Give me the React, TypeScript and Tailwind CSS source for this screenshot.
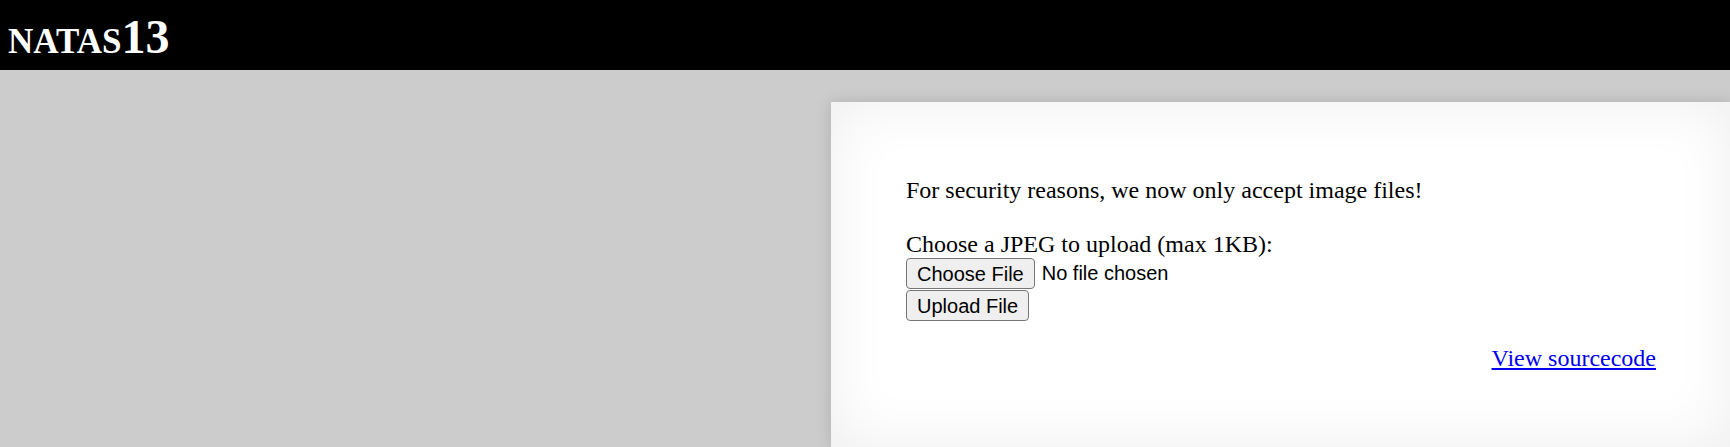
import React from "react";

// Level page: black title bar, grey body, white content card with the upload form.
export default function App() {
  return (
    <div className="min-h-screen bg-[#cccccc] font-['Liberation_Serif',serif] text-black overflow-hidden">
      <h1 className="h-[70px] bg-black text-white pt-[9px] pl-[8px] text-[48px] font-bold leading-[normal] [font-variant:small-caps]">
        <span className="text-[50px] leading-none">natas</span>13
      </h1>

      <div className="flex">
        <div
          className="ml-[831px] mt-[32px] w-[900px] shrink-0 bg-white p-[75px] text-[24px] leading-[normal]
                     shadow-[0_0_14px_rgba(0,0,0,0.14),inset_0_0_60px_rgba(0,0,0,0.07)]"
        >
          For security reasons, we now only accept image files!
          <br />
          <br />
          <form onSubmit={(e) => e.preventDefault()}>
            Choose a JPEG to upload (max 1KB):
            <br />
            <div className="flex items-center gap-[7px] font-['Liberation_Sans',Arial,sans-serif] text-[20px]">
              <button
                type="button"
                className="h-[31px] px-[10px] bg-[#efefef] border border-[#767676] rounded-[4px] leading-none"
              >
                Choose File
              </button>
              <span>No file chosen</span>
            </div>
            <div className="mt-px font-['Liberation_Sans',Arial,sans-serif] text-[20px]">
              <button
                type="submit"
                className="h-[31px] px-[10px] bg-[#efefef] border border-[#767676] rounded-[4px] leading-none"
              >
                Upload File
              </button>
            </div>
          </form>
          <div className="mt-[24px] text-right">
            <a href="#" className="text-[#0000ee] underline">
              View sourcecode
            </a>
          </div>
        </div>
      </div>
    </div>
  );
}
